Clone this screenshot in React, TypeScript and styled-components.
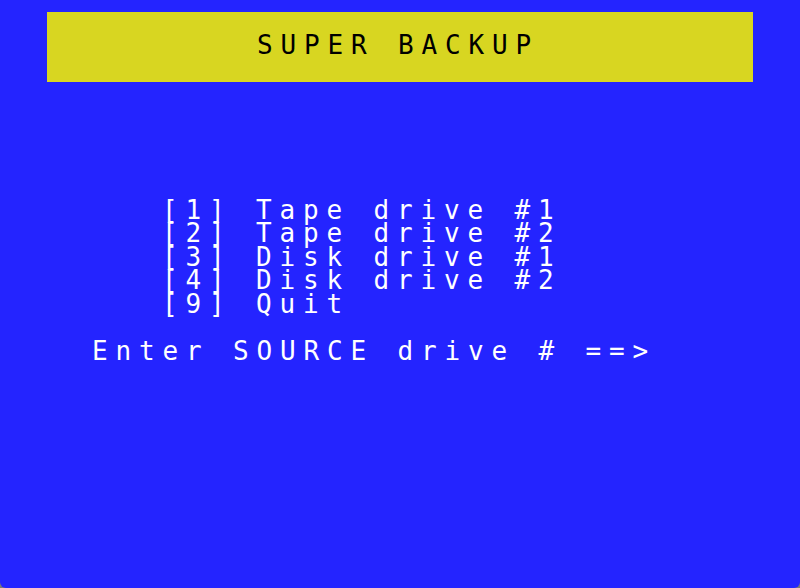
import React from "react";
import styled, { createGlobalStyle } from "styled-components";

const GlobalStyle = createGlobalStyle`
  html, body {
    margin: 0;
    padding: 0;
    background: #7a7a7a;
  }
`;

const Screen = styled.div`
  width: 800px;
  height: 588px;
  background: #2424ff;
  border-radius: 0 0 6px 6px;
  display: flex;
  flex-direction: column;
  font-family: "DejaVu Sans Mono", "Liberation Mono", monospace;
  font-size: 26px;
  line-height: 23.4px;
  letter-spacing: 7.85px;
  white-space: pre;
  overflow: hidden;
`;

const TitleBar = styled.div`
  margin: 12px 47px 0;
  height: 70px;
  background: #d8d621;
  color: #000;
  display: flex;
  align-items: center;
  justify-content: center;
  padding: 0 4px 3px 0;
  box-sizing: border-box;
`;

const Menu = styled.div`
  margin-top: 117px;
  padding-left: 162px;
  display: flex;
  flex-direction: column;
`;

const Line = styled.div`
  color: #fff;
`;

const Prompt = styled.div`
  color: #fff;
  margin-top: 24px;
  padding-left: 92px;
`;

const options = [
  "[1] Tape drive #1",
  "[2] Tape drive #2",
  "[3] Disk drive #1",
  "[4] Disk drive #2",
  "[9] Quit",
];

export default function App() {
  return (
    <>
      <GlobalStyle />
      <Screen>
        <TitleBar>SUPER BACKUP</TitleBar>
        <Menu>
          {options.map((o) => (
            <Line key={o}>{o}</Line>
          ))}
        </Menu>
        <Prompt>Enter SOURCE drive # ==&gt;</Prompt>
      </Screen>
    </>
  );
}
